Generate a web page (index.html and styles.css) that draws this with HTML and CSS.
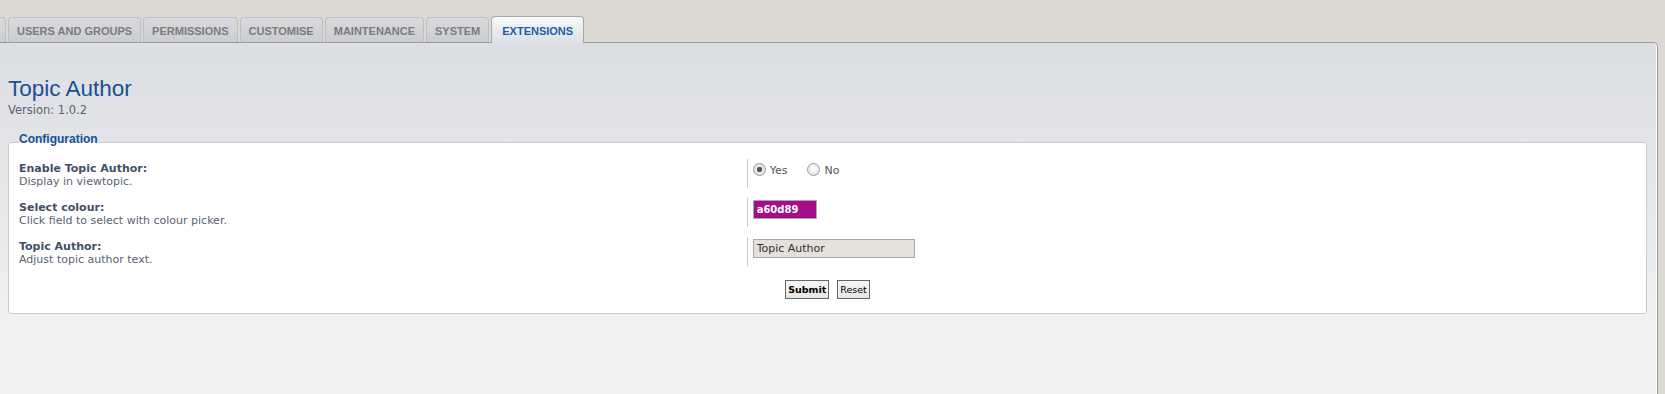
FILE: index.html
```html
<!DOCTYPE html>
<html>
  <head>
    <meta charset="utf-8">
    <title>Topic Author - Extensions</title>
    <link rel="stylesheet" href="styles.css">
  </head>
  <body>

    <div id="tabs">
      <span class="tab tab-cut"></span>
      <a class="tab" href="#">Users and groups</a>
      <a class="tab" href="#">Permissions</a>
      <a class="tab" href="#">Customise</a>
      <a class="tab" href="#">Maintenance</a>
      <a class="tab" href="#">System</a>
      <a class="tab activetab" href="#">Extensions</a>
    </div>

    <div id="main">
      <h1>Topic Author</h1>
      <p class="version">Version: 1.0.2</p>

      <form id="topic_author_form" action="#">
        <fieldset>
          <legend>Configuration</legend>

          <dl>
            <dt><label for="ta_enable">Enable Topic Author:</label><span>Display in viewtopic.</span></dt>
            <dd>
              <label class="radio"><input type="radio" id="ta_enable" name="ta_enable" value="1" checked><span>Yes</span></label>
              <label class="radio"><input type="radio" name="ta_enable" value="0"><span>No</span></label>
            </dd>
          </dl>

          <dl>
            <dt><label for="ta_colour">Select colour:</label><span>Click field to select with colour picker.</span></dt>
            <dd><input type="text" id="ta_colour" class="colour" value="a60d89"></dd>
          </dl>

          <dl>
            <dt><label for="ta_text">Topic Author:</label><span>Adjust topic author text.</span></dt>
            <dd><input type="text" id="ta_text" class="inputbox" value="Topic Author"></dd>
          </dl>

          <p class="submit-buttons">
            <input class="button1" type="submit" value="Submit">
            <input class="button2" type="reset" value="Reset">
          </p>
        </fieldset>
      </form>
    </div>

  </body>
</html>
```

FILE: styles.css
```css
body {
  margin: 0 7px 0 0;
  background-color: #dcd9d2;
  font-family: "DejaVu Sans", Verdana, sans-serif;
  font-size: 11px;
  color: #596273;
}

/* tab bar */
#tabs {
  display: flex;
  align-items: flex-end;
  height: 42px;
}

.tab {
  display: block;
  box-sizing: border-box;
  height: 25px;
  margin-right: 2px;
  padding: 7px 8px 0;
  border: 1px solid #bcbfc3;
  border-bottom: 0;
  border-radius: 4px 4px 0 0;
  background: linear-gradient(#d9dadd, #cbcdd0);
  font: bold 11px/13px "Liberation Sans", Arial, sans-serif;
  text-transform: uppercase;
  text-decoration: none;
  color: #7b7b7b;
}

.tab-cut {
  width: 6px;
  padding: 0;
  border-left: 0;
  border-radius: 0 4px 0 0;
}

.activetab {
  position: relative;
  z-index: 1;
  height: 27px;
  margin-bottom: -1px;
  padding: 8px 10px 0;
  border-color: #a6a8ac;
  background: linear-gradient(#f7f8f9, #dcdfe4);
  color: #1e5ea6;
}

/* main panel */
#main {
  min-height: 360px;
  padding: 0 10px 0 8px;
  border-top: 1px solid #9c9c9c;
  border-right: 1px solid #9c9c9c;
  border-top-right-radius: 5px;
  box-shadow: inset -1px 0 #ffffff;
  background: linear-gradient(#dbdee3 0, #e0e2e6 70px, #e9eaec 190px, #f2f2f2 290px);
}

h1 {
  margin: 33px 0 2px;
  font: normal 22.5px/26px "Liberation Sans", Arial, sans-serif;
  color: #1a5193;
}

.version {
  margin: 0;
  font-size: 11.5px;
  line-height: 13px;
  color: #5c6170;
}

form {
  margin: 0;
}

fieldset {
  margin: 15px 0 0;
  padding: 7px 10px 14px;
  border: 1px solid #cacaca;
  border-radius: 3px;
  background-color: #ffffff;
}

legend {
  padding: 0 0 6px;
  font: bold 12px/14px "Liberation Sans", Arial, sans-serif;
  color: #1a5193;
}

/* option rows */
dl {
  display: flex;
  margin: 0 0 10px;
}

dt {
  width: 45%;
  flex: none;
  padding-top: 3px;
  line-height: 13px;
}

dt label {
  display: block;
  font-weight: bold;
  color: #425067;
}

dt span {
  display: block;
}

dd {
  display: flex;
  flex: 1;
  gap: 20px;
  box-sizing: border-box;
  height: 29px;
  margin: 0;
  padding: 2px 0 0 5px;
  border-left: 1px solid #cccccc;
}

label.radio {
  display: flex;
  align-items: flex-start;
  gap: 4px;
  color: #4f5868;
  line-height: 13px;
}

label.radio span {
  padding-top: 3px;
}

label.radio input {
  -webkit-appearance: none;
  appearance: none;
  width: 13px;
  height: 13px;
  margin: 2px 0 0;
  border: 1px solid #9a9a9a;
  border-radius: 50%;
  background: radial-gradient(circle at 50% 35%, #ffffff, #dcdcdc);
  box-sizing: border-box;
}

label.radio input:checked {
  background: radial-gradient(circle, #555555 0, #555555 2.5px, #eeeeee 3px, #dadada 6px);
}

input.colour,
input.inputbox {
  box-sizing: border-box;
  height: 19px;
  margin: 0;
  padding: 0 3px;
  border: 1px solid #a8a8a8;
  outline: none;
}

input.colour {
  width: 64px;
  background-color: #a60d89;
  font: bold 10px "DejaVu Sans", Verdana, sans-serif;
  color: #ffffff;
}

input.inputbox {
  width: 162px;
  background-color: #e4e0da;
  font: 11px "DejaVu Sans", Verdana, sans-serif;
  color: #333333;
}

/* buttons */
.submit-buttons {
  display: flex;
  justify-content: center;
  gap: 8px;
  margin: 14px 0 0;
}

.button1,
.button2 {
  box-sizing: border-box;
  height: 19px;
  margin: 0;
  padding: 0 2px;
  border: 1px solid #666666;
  border-radius: 0;
  background: linear-gradient(#f7f7f7, #e6e6e6);
  font: 9.5px "DejaVu Sans", Verdana, sans-serif;
  color: #000000;
}

.button1 {
  font-weight: bold;
}
```
